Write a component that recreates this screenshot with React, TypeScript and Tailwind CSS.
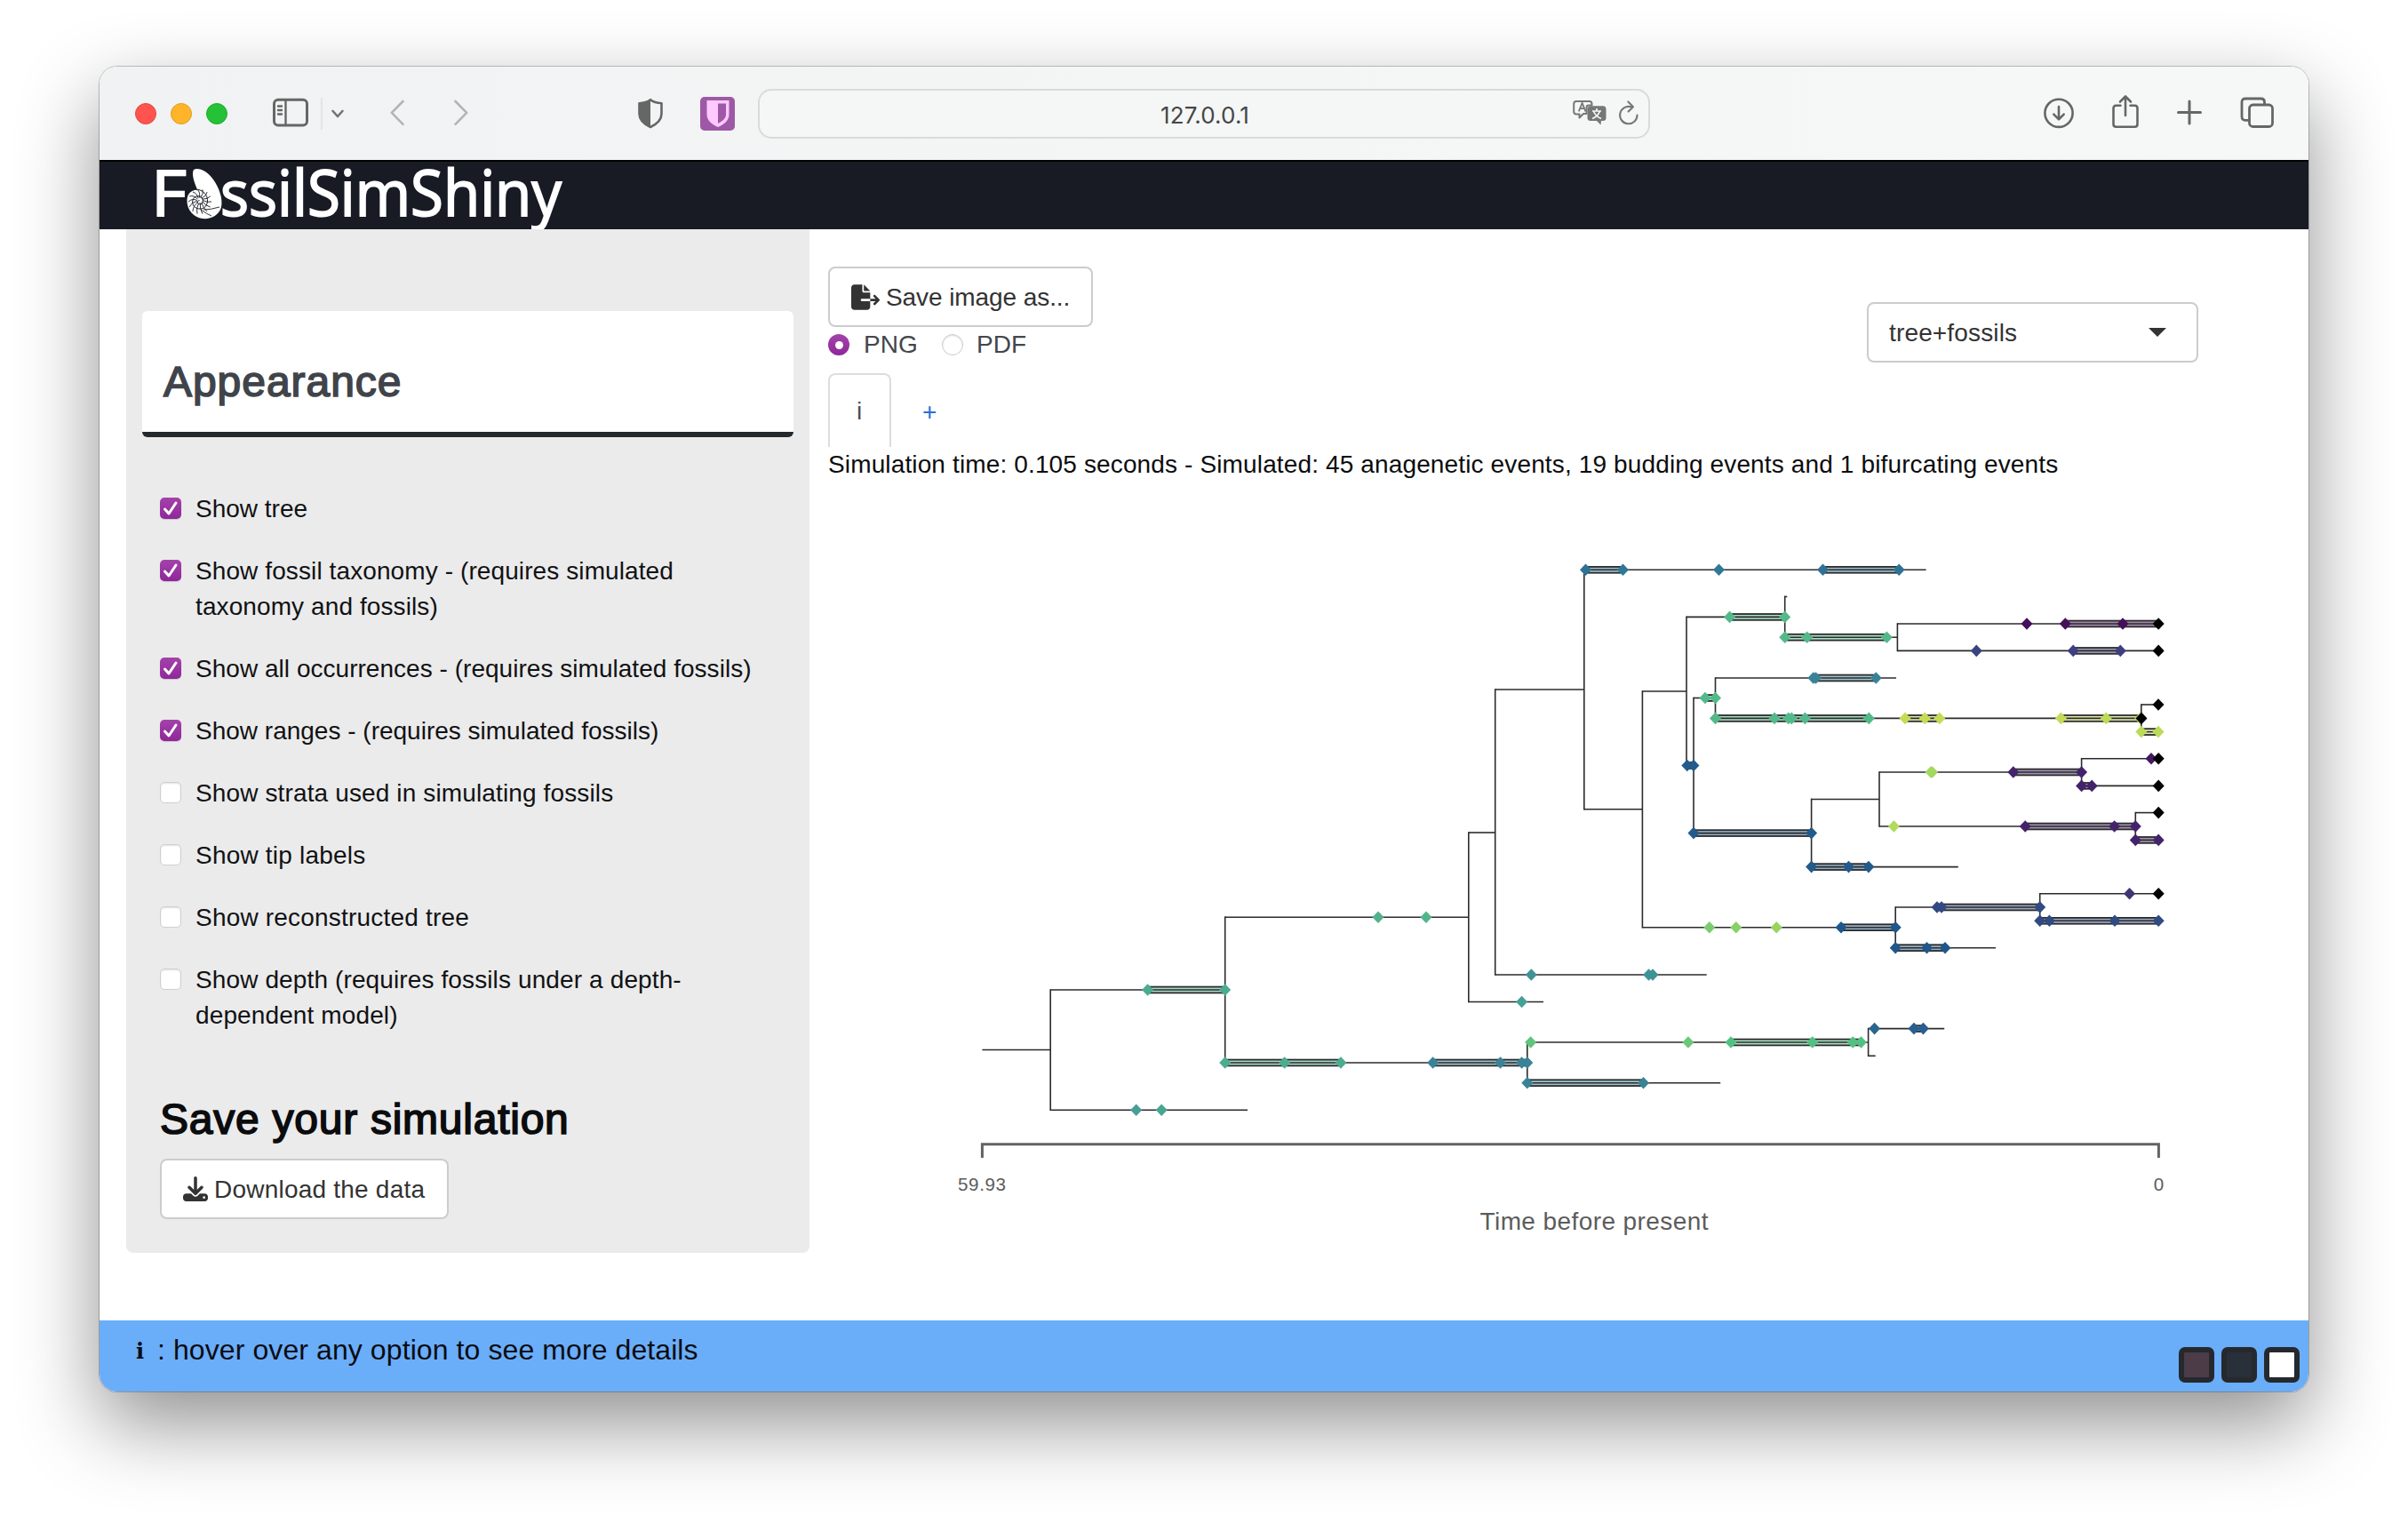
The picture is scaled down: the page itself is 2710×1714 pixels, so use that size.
import React from "react";
import { FaDownload, FaFileExport } from "react-icons/fa6";

type Dot = [number, number, string];
type Seg = [number, number, number, string];

const PURPLE = "#45105a";
const VIOLET = "#43246a";
const INDIGO = "#3d3f80";
const NAVY = "#314a82";
const BLUE = "#225b8b";
const BLUE2 = "#2f7296";
const TEAL = "#3a8397";
const GREEN = "#54b98a";
const JADE = "#4bac8f";
const LIME = "#c5db55";
const BLACK = "#000000";

/* Horizontal branches: y, x1, x2 */
const branches: [number, number, number][] = [
  [641.3, 1782.8, 2167.6], [671.5, 2008, 2011.3], [694.4, 1898, 2008.7], [717.2, 2008.7, 2135.4],
  [702, 2135.4, 2429], [732.4, 2135.4, 2429], [763, 1930.5, 2134], [785.5, 1906, 1930.5],
  [808.4, 1930.5, 2409.8], [793, 2409.8, 2429], [823.6, 2409.8, 2429], [778, 1848.4, 1898],
  [861.5, 1898, 1906], [853.8, 2342.6, 2429], [869, 2115, 2342.6], [884.4, 2342.6, 2429],
  [899.5, 2038.6, 2115], [930, 2115, 2403.3], [914.6, 2403.3, 2429], [945.4, 2403.3, 2429],
  [937.6, 1906, 2038.6], [975.6, 2038.6, 2203.8], [910.7, 1782.8, 1848.4], [1043.7, 1848.4, 2133.2],
  [1021, 2133.2, 2295.7], [1005.8, 2295.7, 2429], [1036.3, 2295.7, 2429], [1066.7, 2133.2, 2246],
  [1097, 1682.7, 1920.7], [776, 1682.7, 1782.8], [937, 1652.8, 1682.7], [1127.5, 1652.8, 1737],
  [1032.2, 1378.7, 1652.8], [1196, 1378.7, 1718.8], [1114, 1182.2, 1378.7], [1181.5, 1105.4, 1182.2],
  [1249.2, 1182.2, 1404], [1173, 1718.8, 2102.6], [1157.6, 2102.6, 2188.2], [1188.3, 2102.6, 2110.7],
  [1218.7, 1718.8, 1936.2],
];

/* Vertical connectors: x, y1, y2 */
const splits: [number, number, number][] = [
  [1782.8, 641.3, 910.7], [2008.7, 671.5, 717.2], [2135.4, 702, 732.4], [2409.8, 793, 823.6],
  [1930.5, 763, 808.4], [1898, 694.4, 861.5], [1906, 785.5, 937.6], [2342.6, 853.8, 884.4],
  [2115, 869, 930], [2403.3, 914.6, 945.4], [2038.6, 899.5, 975.6], [1848.4, 778, 1043.7],
  [2133.2, 1021, 1066.7], [2295.7, 1005.8, 1036.3], [1182.2, 1114, 1249.2], [1378.7, 1032.2, 1196],
  [1652.8, 937, 1127.5], [1682.7, 776, 1097], [1718.8, 1173, 1218.7], [2102.6, 1157.6, 1188.3],
];

/* Stratigraphic ranges: y, x1, x2, colour */
const ranges: Seg[] = [
  [641.3, 1784.5, 1826.5, BLUE2], [641.3, 2051.5, 2137.2, BLUE2], [694.4, 1946.6, 2008.7, GREEN],
  [717.2, 2008.7, 2123.4, GREEN], [702, 2324.3, 2429, PURPLE], [732.4, 2333.2, 2386.3, INDIGO],
  [763, 2040.8, 2111.3, TEAL], [785.5, 1919, 1930.5, GREEN], [808.4, 1930.5, 2103.3, GREEN],
  [808.4, 2144, 2182.8, LIME], [808.4, 2319.4, 2409.5, LIME], [823.6, 2409.8, 2429, LIME],
  [861.5, 1898.8, 1906, BLUE], [869, 2265.8, 2342.6, VIOLET], [884.4, 2342.6, 2354.2, VIOLET],
  [930, 2279.2, 2403.3, VIOLET], [945.4, 2403.3, 2429, VIOLET], [937.6, 1906, 2038.6, BLUE],
  [975.6, 2038.6, 2102.9, BLUE], [1043.7, 2072, 2133.2, BLUE], [1021, 2180, 2295.7, NAVY],
  [1036.3, 2295.7, 2429, NAVY], [1066.7, 2133.2, 2189, BLUE], [1114, 1291.6, 1378.7, JADE],
  [1196, 1378.7, 1509, JADE], [1196, 1612.6, 1718.8, TEAL], [1173, 1948, 2094.5, "#53c083"],
  [1157.6, 2154, 2164.4, BLUE], [1218.7, 1718.8, 1849.5, TEAL],
];

/* Fossil occurrences: x, y, colour */
const dots: Dot[] = [
  [1784.5, 641.3, BLUE2], [1826.5, 641.3, "#2f7896"], [1934.5, 641.3, "#2f7896"], [2051.5, 641.3, BLUE2], [2137.2, 641.3, BLUE2],
  [1946.6, 694.4, GREEN], [2008.7, 694.4, GREEN], [2008.7, 717.2, GREEN], [2033.7, 717.2, GREEN], [2123.4, 717.2, GREEN],
  [2281, 702, PURPLE], [2324.3, 702, PURPLE], [2389, 702, PURPLE], [2429.2, 702, BLACK],
  [2224.3, 732.4, "#38457f"], [2333.2, 732.4, INDIGO], [2386.3, 732.4, INDIGO], [2429.2, 732.4, BLACK],
  [2040.8, 763, TEAL], [2043.5, 763, TEAL], [2111.3, 763, TEAL], [1919, 785.5, GREEN], [1930.5, 785.5, GREEN],
  [1930.5, 808.4, GREEN], [1997, 808.4, GREEN], [2012.7, 808.4, GREEN], [2016.3, 808.4, GREEN], [2031.4, 808.4, GREEN], [2103.3, 808.4, GREEN],
  [2144, 808.4, LIME], [2166.3, 808.4, LIME], [2182.8, 808.4, LIME], [2319.4, 808.4, LIME], [2370.3, 808.4, "#bcdb57"], [2408.6, 808.4, "#bcdb57"],
  [2410, 808.4, BLACK], [2429, 793, BLACK], [2409.8, 823.6, "#bcdb57"], [2429, 823.6, "#bcdb57"],
  [1898.8, 861.5, BLUE], [1906, 861.5, BLUE], [2421, 853.8, "#45195f"], [2429.2, 853.8, BLACK],
  [2173, 869, "#a3d860"], [2174.6, 869, "#a3d860"], [2265.8, 869, VIOLET], [2342.6, 869, VIOLET],
  [2342.6, 884.4, VIOLET], [2354.2, 884.4, VIOLET], [2429.2, 884.4, BLACK],
  [2131.4, 930, "#b2da5c"], [2279.2, 930, VIOLET], [2379.6, 930, VIOLET], [2403.3, 930, VIOLET],
  [2429.2, 914.6, BLACK], [2403.3, 945.4, VIOLET], [2429.2, 945.4, VIOLET],
  [1906, 937.6, BLUE], [2038.6, 937.6, BLUE], [2038.6, 975.6, BLUE], [2080.5, 975.6, BLUE], [2102.9, 975.6, BLUE],
  [1923.8, 1043.7, "#7bcb70"], [1953.8, 1043.7, "#88d068"], [1999.3, 1043.7, "#96d561"], [2072, 1043.7, "#20578a"], [2133.2, 1043.7, "#20578a"],
  [2180, 1021, NAVY], [2185, 1021, NAVY], [2295.7, 1021, NAVY], [2396.6, 1005.8, "#433575"], [2429.2, 1005.8, BLACK],
  [2295.7, 1036.3, NAVY], [2306.4, 1036.3, NAVY], [2380, 1036.3, NAVY], [2429.2, 1036.3, NAVY],
  [2133.2, 1066.7, "#20578a"], [2168.5, 1066.7, "#20578a"], [2189, 1066.7, "#20578a"],
  [1723.3, 1097, "#3f9396"], [1855.5, 1097, "#3f9396"], [1860, 1097, "#3f9396"], [1712.6, 1127.5, "#45a096"],
  [1551, 1032.2, "#52b18c"], [1605, 1032.2, "#52b58a"], [1291.6, 1114, JADE], [1378.7, 1114, JADE],
  [1378.7, 1196, JADE], [1445.6, 1196, JADE], [1509, 1196, JADE],
  [1612.6, 1196, TEAL], [1688.5, 1196, TEAL], [1712.6, 1196, TEAL], [1718.8, 1196, TEAL],
  [1278.7, 1249.2, "#469f94"], [1307.2, 1249.2, "#48a591"],
  [1722.6, 1173, "#61c37c"], [1899.9, 1173, "#6ac878"], [1948, 1173, "#53c083"], [2039.7, 1173, "#53c083"], [2085.2, 1173, "#53c083"], [2094.5, 1173, "#53c083"],
  [2109.6, 1157.6, "#2a6590"], [2154, 1157.6, "#285f8e"], [2164.4, 1157.6, "#285f8e"],
  [1718.8, 1218.7, TEAL], [1849.5, 1218.7, TEAL],
];

function TreePlot() {
  return (
    <svg className="block h-[860px] w-[1560px]" viewBox="932 550 1560 860" fontFamily="Liberation Sans, Arial, sans-serif">
      <g stroke="#2b2b2b" strokeWidth="1.8" fill="none">
        {ranges.map(([y, x1, x2, c], i) => (
          <rect key={i} x={x1} y={y - 3.4} width={x2 - x1} height={6.8} fill={c} fillOpacity={0.5} />
        ))}
        {branches.map(([y, x1, x2], i) => (
          <path key={i} d={`M${x1} ${y}H${x2}`} strokeWidth="1.6" />
        ))}
        {splits.map(([x, y1, y2], i) => (
          <path key={i} d={`M${x} ${y1 - 0.8}V${y2 + 0.8}`} strokeWidth="1.6" />
        ))}
      </g>
      {dots.map(([x, y, c], i) => (
        <path key={i} d={`M${x - 6.5} ${y}l6.5 -6.8l6.5 6.8l-6.5 6.8z`} fill={c} />
      ))}
      <path d="M1105.4 1303V1287.7H2429.4V1303" fill="none" stroke="#636363" strokeWidth="3" />
      <g fill="#5c5c5c" textAnchor="middle">
        <text x="1105" y="1339.500" fontSize="20.6" textLength="54">59.93</text>
        <text x="2429.4" y="1339.500" fontSize="20.6">0</text>
        <text x="1794" y="1383.500" fontSize="28" textLength="257">Time before present</text>
      </g>
    </svg>
  );
}

function Toolbar() {
  const s = { fill: "none", stroke: "#666666", strokeWidth: 2.6, strokeLinecap: "round" as const, strokeLinejoin: "round" as const };
  return (
    <div className="flex h-[105px] shrink-0 items-center bg-gradient-to-r from-[#f1f2f3] via-[#f4f6f6] to-[#f5f8f7] pt-px pl-[40px]">
      <div className="flex gap-4">
        <span className="size-6 rounded-full border border-[#e2463f] bg-[#ff544d]" />
        <span className="size-6 rounded-full border border-[#e09e1d] bg-[#ffb429]" />
        <span className="size-6 rounded-full border border-[#1dad2b] bg-[#25c137]" />
      </div>
      <svg className="ml-[51px] h-10 w-10 overflow-visible" viewBox="0 0 40 40" {...s} strokeWidth="3">
        <rect x="1.5" y="4.3" width="37" height="28.6" rx="4.5" />
        <path d="M14.5 4.5V33M6 11.5h4M6 16h4M6 20.5h4" strokeWidth="2.4" />
      </svg>
      <span className="ml-[14px] h-9 w-0.5 bg-[#e3e5e5]" />
      <svg className="ml-[10px] h-10 w-[14px]" viewBox="0 0 14 40" {...s} stroke="#727272"><path d="M1.6 17l5.4 6l5.4 -6" /></svg>
      <svg className="ml-[52px] h-10 w-[16px]" viewBox="0 0 16 40" {...s} stroke="#b3b4b5"><path d="M14.5 6L1.8 18.8L14.5 31.8" /></svg>
      <svg className="ml-[56px] h-10 w-[16px]" viewBox="0 0 16 40" {...s} stroke="#b3b4b5"><path d="M1.5 6L14.2 18.8L1.5 31.8" /></svg>
      <svg className="ml-[190px] h-10 w-[30px]" viewBox="0 0 30 40" {...s}>
        <path d="M15 4.2C11 7.4 6.5 8 2.5 8.3V20C2.5 27 7.5 31.5 15 35C22.5 31.5 27.5 27 27.5 20V8.3C23.500 8 19 7.4 15 4.2Z" />
        <path d="M15 4.2C11 7.4 6.5 8 2.5 8.3V20C2.5 27 7.5 31.5 15 35Z" fill="#666666" stroke="none" />
      </svg>
      <svg className="ml-[41px] h-10 w-[39px]" viewBox="0 0 39 40">
        <rect y="1" width="39" height="38" rx="5" fill="#9d59a6" />
        <path d="M7.5 5H32.5V21C32.5 28 26 32.5 20 35C14 32.5 7.5 28 7.5 21Z" fill="#ffc9ff" />
        <path d="M20 8.5H29V21C29 25.5 24.5 28.5 20 31Z" fill="#9d59a6" />
      </svg>
      <div className="ml-[26px] flex h-14 w-[1004px] items-center rounded-[15px] border-2 border-[#d9dbdb] bg-[#f4f7f6] pl-[447px]">
        <span className="w-[108px] pt-0.5 text-center font-['Inter'] text-[26px] tracking-[0.12px] text-[#464646]">127.0.0.1</span>
        <svg className="ml-[360px] h-10 w-[38px]" viewBox="0 0 38 40">
          <path d="M4 6H18.5Q21.5 6 21.5 9V10.5H17.5Q15.5 10.5 15.5 13V20H12L7.5 24.5V20.5H4Q1.2 20.5 1.2 17.5V9Q1.2 6 4 6Z" fill="none" stroke="#777777" strokeWidth="2" strokeLinejoin="round" />
          <path d="M6.8 17.3L10.6 8L14.4 17.3M8.2 14.2H13" fill="none" stroke="#777777" strokeWidth="1.8" />
          <path d="M20 11.3H34Q37.5 11.3 37.5 15V24.5Q37.5 28 34 28H32L31.5 32.5L27 28H20Q16.500 28 16.500 24.5V15Q16.5 11.3 20 11.3Z" fill="#777777" />
          <path d="M22 17H32M27 14V17M30.5 17Q28.5 23 22 25.5M23.5 17.5Q26 23 32 25.5" fill="none" stroke="#f4f7f6" strokeWidth="1.7" />
        </svg>
        <svg className="ml-[13px] h-10 w-[24px]" viewBox="0 0 24 40" {...s} stroke="#777777" strokeWidth="2.1">
          <path d="M21.5 21.5A9.7 9.7 0 1 1 14.5 12.3M11.3 6.5L17 12.2L11.6 17.6" />
        </svg>
      </div>
      <svg className="ml-[443px] h-10 w-[34px] overflow-visible" viewBox="0 0 34 40" {...s}>
        <circle cx="17" cy="19.3" r="15.6" />
        <path d="M17 12V26M11.3 20.7L17 26.4L22.7 20.7" />
      </svg>
      <svg className="ml-[43px] h-10 w-[30px] overflow-visible" viewBox="0 0 30 40" {...s}>
        <path d="M9.5 10.8H4.5Q1.5 10.8 1.5 14V31.5Q1.5 34.8 4.5 34.8H25.5Q28.5 34.8 28.5 31.5V14Q28.5 10.8 25.5 10.8H20.5M15 22V0.8M9 6.5L15 0.5L21 6.5" />
      </svg>
      <svg className="ml-[43px] h-10 w-[28px]" viewBox="0 0 28 40" {...s} strokeWidth="3"><path d="M1.5 18.5H26.5M14 6V31" /></svg>
      <svg className="ml-[43px] h-10 w-[38px]" viewBox="0 0 38 40" {...s} strokeWidth="2.800">
        <rect x="10.5" y="10" width="26" height="24.5" rx="4" />
        <path d="M10 27.3H6Q2 27.3 2 23.3V7Q2 3 6 3H23.5Q27.5 3 27.5 7V9.5" />
      </svg>
    </div>
  );
}

function Logo() {
  const rays = Array.from({ length: 14 }, (_, i) => (i * 2 * Math.PI) / 14);
  return (
    <svg className="ml-[58px] h-[78px] w-[480px]" viewBox="170 180 480 78" fill="#ffffff" fontFamily="'Open Sans', 'Noto Sans', sans-serif" fontWeight="400">
      <g stroke="#ffffff" strokeWidth="1.9" fontSize="72">
        <text x="170" y="243.3" textLength="40" lengthAdjust="spacingAndGlyphs">F</text>
        <text x="248" y="243.3" textLength="384" lengthAdjust="spacingAndGlyphs">ssilSimShiny</text>
      </g>
      <path d="M218 191C223 188 233 192 240 202C247 212 251 224 249 233C247 242 237 247 228 246C218 245 210 236 210.5 225C211 217 216 213 222 213.5C219 206 215 196 218 191Z" />
      <g fill="none" stroke="#181b24" strokeWidth="1">
        <path d="M211.5 219C217 210 229 212 233 222C235 229 231 235 226 235C219 235.5 215.5 230 217 225C218.5 220 226 219 228 224C229.5 228 226 231 223.5 229.5C221.5 228 222 225.5 224.5 225.5" />
        {rays.map((a) => (
          <path
            key={a}
            strokeWidth="0.9"
            d={`M${225 + 3 * Math.cos(a)} ${225.5 + 3 * Math.sin(a)}Q${225 + 9 * Math.cos(a + 0.3)} ${225.5 + 9 * Math.sin(a + 0.3)} ${225 + 13 * Math.cos(a)} ${227 + 14 * Math.sin(a)}`}
          />
        ))}
        <path d="M229 236Q237 236 247 233M226 236Q233 241 238 243" strokeWidth="0.9" />
      </g>
    </svg>
  );
}

const options: { label: string[]; on: boolean; tracking: string }[] = [
  { label: ["Show tree"], on: true, tracking: "tracking-normal" },
  { label: ["Show fossil taxonomy - (requires simulated", "taxonomy and fossils)"], on: true, tracking: "tracking-[0.1px]" },
  { label: ["Show all occurrences - (requires simulated fossils)"], on: true, tracking: "tracking-[0.03px]" },
  { label: ["Show ranges - (requires simulated fossils)"], on: true, tracking: "tracking-normal" },
  { label: ["Show strata used in simulating fossils"], on: false, tracking: "tracking-[0.13px]" },
  { label: ["Show tip labels"], on: false, tracking: "tracking-[0.2px]" },
  { label: ["Show reconstructed tree"], on: false, tracking: "tracking-[0.2px]" },
  { label: ["Show depth (requires fossils under a depth-", "dependent model)"], on: false, tracking: "tracking-[0.12px]" },
];

function Checkbox({ on }: { on: boolean }) {
  return on ? (
    <span className="mt-[7px] flex size-6 shrink-0 items-center justify-center rounded-[5px] bg-gradient-to-b from-[#a342ab] to-[#8f2699] shadow-[0_1px_1px_rgba(0,0,0,0.15)]">
      <svg className="size-6" viewBox="0 0 24 24" fill="none" stroke="#ffffff" strokeWidth="3" strokeLinecap="round" strokeLinejoin="round">
        <path d="M5.5 13L10 18L18 6" />
      </svg>
    </span>
  ) : (
    <span className="mt-[7px] size-6 shrink-0 rounded-[5px] border border-[#cfcfcf] bg-white shadow-[inset_0_1px_2px_rgba(0,0,0,0.12)]" />
  );
}

function Sidebar() {
  return (
    <aside className="h-[1152px] w-[769px] shrink-0 rounded-b-[8px] bg-[#ebebeb] px-[18px] pt-[92px]">
      <div className="h-[142px] rounded-[6px] border-b-[6px] border-[#24292e] bg-white pt-[56px] pl-[24px]">
        <h2 className="text-[48px] leading-[48px] tracking-[0.95px] text-[#40444a] [-webkit-text-stroke:1.6px_#40444a]">Appearance</h2>
      </div>
      <div className="mt-[61px] flex flex-col gap-[30px] pl-5">
        {options.map((o) => (
          <label key={o.label[0]} className="flex gap-4 text-[28px] leading-[40px] whitespace-nowrap text-[#111214]">
            <Checkbox on={o.on} />
            <span className={o.tracking}>{o.label.map((l) => <span key={l} className="block">{l}</span>)}</span>
          </label>
        ))}
      </div>
      <h2 className="mt-[73px] pl-5 text-[48px] leading-[48px] tracking-[0.75px] whitespace-nowrap text-[#0b0c0e] [-webkit-text-stroke:1.7px_#0b0c0e]">Save your simulation</h2>
      <button className="mt-[20px] ml-5 flex h-[68px] w-[325px] items-center rounded-[8px] border-2 border-[#cccccc] bg-white pl-6 text-[28px] text-[#333333]">
        <FaDownload className="mr-[7px] size-7" />
        <span className="pt-px tracking-[0.22px] whitespace-nowrap">Download the data</span>
      </button>
    </aside>
  );
}

function Main() {
  return (
    <main className="flex-1 pl-[21px]">
      <div className="flex h-[162px] justify-between pr-[124px]">
        <div className="pt-[42px]">
          <button className="flex h-[68px] w-[298px] items-center rounded-[8px] border-2 border-[#cccccc] bg-white pl-6 text-[28px] text-[#333333]">
            <FaFileExport className="mr-[7px] h-[29px] w-8" />
            <span className="pt-0.5 tracking-[-0.08px] whitespace-nowrap">Save image as...</span>
          </button>
          <div className="flex h-10 items-center text-[28px] leading-10 text-[#43474d]">
            <span className="flex size-6 items-center justify-center rounded-full bg-gradient-to-b from-[#a342ab] to-[#8f2699]">
              <span className="size-[9px] rounded-full bg-white" />
            </span>
            <span className="ml-4 w-[60px]">PNG</span>
            <span className="ml-[28px] size-6 rounded-full border border-[#cccccc] bg-white shadow-[inset_0_1px_2px_rgba(0,0,0,0.15)]" />
            <span className="ml-[15px]">PDF</span>
          </div>
        </div>
        <div className="mt-[82px] flex h-[68px] w-[373px] items-center rounded-[8px] border-2 border-[#cccccc] bg-white pr-[34px] pl-[23px] text-[28px] text-[#333333]">
          <span className="pt-0.5 tracking-[0.15px]">tree+fossils</span>
          <span className="ml-auto h-0 w-0 border-x-10 border-t-10 border-x-transparent border-t-[#333333]" />
        </div>
      </div>
      <div className="flex h-[83px] text-[28px]">
        <span className="flex w-[71px] justify-center rounded-t-[8px] border-2 border-b-0 border-[#dddddd] pt-[21px] pr-px leading-10 text-[#495057]">i</span>
        <span className="ml-[35px] pt-[24px] leading-10 text-[#2570d8]">+</span>
      </div>
      <p className="h-[47px] text-[28px] leading-10 tracking-[0.135px] whitespace-nowrap text-[#0c0d0e]">
        Simulation time: 0.105 seconds - Simulated: 45 anagenetic events, 19 budding events and 1 bifurcating events
      </p>
      <TreePlot />
    </main>
  );
}

export default function App() {
  return (
    <div className="h-[1714px] w-[2710px] overflow-hidden bg-white pt-[75px] pl-[112px] font-['Liberation_Sans',Arial,sans-serif]">
      <div className="flex h-[1491px] w-[2486px] flex-col rounded-[20px] shadow-[0_0_0_1px_rgba(0,0,0,0.22),0_36px_90px_rgba(0,0,0,0.44)]">
        <div className="flex h-full flex-col overflow-hidden rounded-[20px] bg-white">
          <Toolbar />
          <header className="flex h-[78px] shrink-0 border-t-2 border-black bg-[#181b24]">
            <div className="-mt-0.5"><Logo /></div>
          </header>
          <div className="flex h-[1228px] shrink-0 bg-white pl-[30px]">
            <Sidebar />
            <Main />
          </div>
          <footer className="flex h-20 shrink-0 bg-[#6aadf9] pr-[10px] pl-[41px] text-[32px] text-[#0b0c10]">
            <span className="mt-[15px] w-[24px] font-['DejaVu_Serif',serif] text-[24px] leading-10 font-bold">i</span>
            <span className="mt-[13px] leading-10 tracking-[0.09px] whitespace-nowrap">: hover over any option to see more details</span>
            <div className="mt-[30px] ml-auto flex gap-2">
              <span className="size-10 rounded-[7px] border-6 border-[#25292d] bg-[#4c3c48]" />
              <span className="size-10 rounded-[7px] border-6 border-[#25292d] bg-[#2a303a]" />
              <span className="size-10 rounded-[7px] border-6 border-[#25292d] bg-white" />
            </div>
          </footer>
        </div>
      </div>
    </div>
  );
}
